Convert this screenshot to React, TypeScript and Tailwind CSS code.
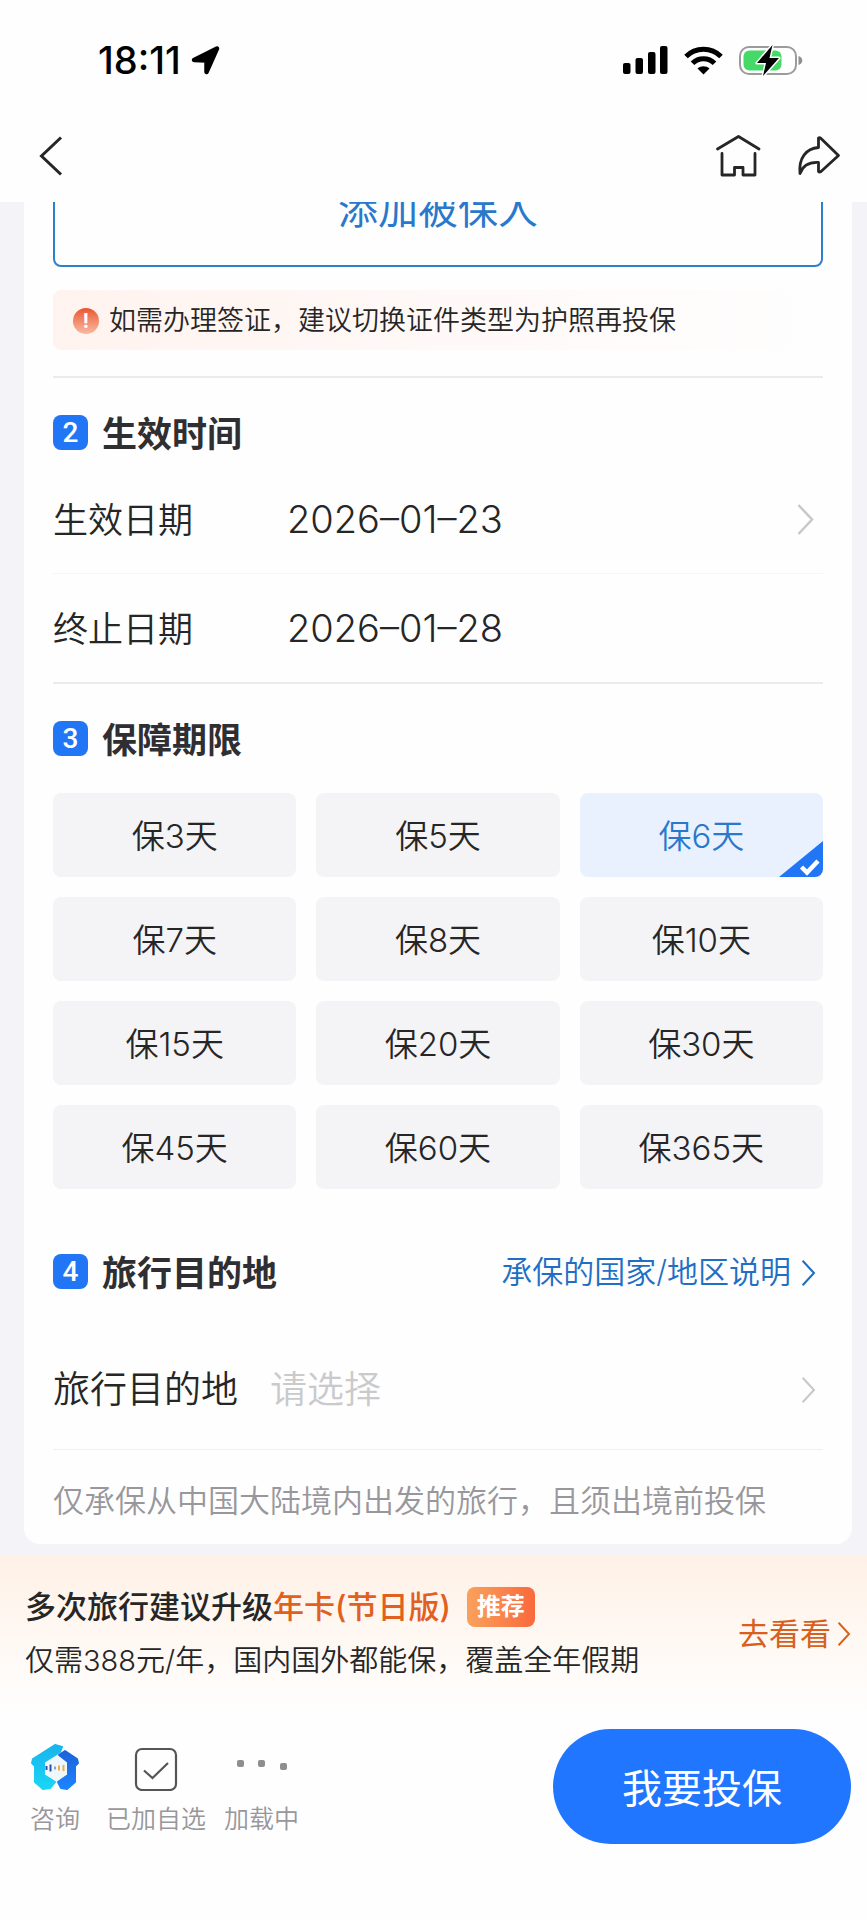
import React, { useState } from 'react';

const PERIODS = [3, 5, 6, 7, 8, 10, 15, 20, 30, 45, 60, 365];

const StatusBar = () => (
  <div className="flex h-[120px] items-center justify-between pl-[98px] pr-16 text-black">
    <div className="flex items-center gap-2.5">
      <span className="text-[38px] font-medium leading-10">18:11</span>
      <svg width="29" height="29" viewBox="0 0 29 29" aria-hidden="true">
        <path d="M26 2.500 L15.500 26 V14.500 L3 14 Z" fill="currentColor" stroke="currentColor" strokeWidth="4.500" strokeLinejoin="round" />
      </svg>
    </div>
    <div className="flex items-center gap-4">
      <svg width="45" height="28" viewBox="0 0 45 28" fill="currentColor" aria-hidden="true">
        <rect x="0" y="17" width="7.500" height="11" rx="2" />
        <rect x="12.500" y="12" width="7.500" height="16" rx="2" />
        <rect x="25" y="6" width="7.500" height="22" rx="2" />
        <rect x="37" y="0" width="7.500" height="28" rx="2" />
      </svg>
      <svg width="39" height="29" viewBox="0 0 39 29" fill="none" stroke="currentColor" strokeWidth="5" aria-hidden="true">
        <path d="M2 10.500 C11.500 0.800 27.500 0.800 37 10.500" />
        <path d="M8.500 17.300 C14.500 11.200 24.500 11.200 30.500 17.300" />
        <path d="M19.500 28.500 L13.500 22.600 C17 19.400 22 19.400 25.500 22.600 Z" fill="currentColor" stroke="none" />
      </svg>
      <svg width="64" height="31" viewBox="0 0 64 31" aria-hidden="true">
        <rect x="1" y="2" width="56" height="27" rx="9" fill="#fff" stroke="#9b9b9b" strokeWidth="2" />
        <path d="M59.500 11 C64.500 12 64.500 19 59.500 20 Z" fill="#8f8f8f" />
        <rect x="4.500" y="5.500" width="38" height="20" rx="6" fill="#45d967" />
        <path d="M33.500 0 L18 18 H27 L24 31 L40 13 H30.500 Z" fill="#000" stroke="#fff" strokeWidth="3" strokeLinejoin="round" paintOrder="stroke" />
      </svg>
    </div>
  </div>
);

const NavBar = () => (
  <nav className="flex h-[82px] items-start justify-between pl-[38px] pr-[26px] pt-[14px] text-[#262626]">
    <button aria-label="返回">
      <svg width="26" height="44" viewBox="0 0 26 44" fill="none" stroke="currentColor" strokeWidth="3" aria-hidden="true">
        <path d="M23 3.500 L3.500 22 L23 40.500" />
      </svg>
    </button>
    <div className="flex gap-9">
      <button aria-label="首页">
        <svg width="46" height="44" viewBox="0 0 46 44" fill="none" stroke="currentColor" strokeWidth="2.800" strokeLinejoin="round" strokeLinecap="round" aria-hidden="true">
          <path d="M2.500 15 L23.500 2.500 L44 15" />
          <path d="M7 19.500 V41 H19.500 V33.500 H28 V41 H40 V19.500" />
        </svg>
      </button>
      <button aria-label="分享">
        <svg width="44" height="44" viewBox="0 0 44 44" fill="none" stroke="currentColor" strokeWidth="2.800" strokeLinejoin="round" aria-hidden="true">
          <path d="M21.500 13.500 V4 Q22.500 3 24 4.500 L41.500 21.500 L24 37.500 Q22.500 38.500 21.500 37.500 V28.500 C12 28 6 31 3 39.500 C1.500 24 9 14.500 21.500 13.500 Z" />
        </svg>
      </button>
    </div>
  </nav>
);

const Chevron = ({ className }: { className: string }) => (
  <svg className={className} viewBox="0 0 17 31" fill="none" stroke="currentColor" strokeWidth="2.500" aria-hidden="true">
    <path d="M1.500 1 L15 15.500 L1.500 30" />
  </svg>
);

const SectionTitle = ({ index, title }: { index: number; title: string }) => (
  <h2 className="flex h-[37px] items-center gap-[14px] text-[35px] font-bold text-[#2f2f33]">
    <span className="flex size-[35px] items-center justify-center rounded-lg bg-[#2176f5] font-[Roboto] text-[28px] font-medium text-white">
      {index}
    </span>
    <span className="pt-1">{title}</span>
  </h2>
);

const ConsultLogo = () => (
  <svg width="50" height="48" viewBox="0 0 50 48" aria-hidden="true">
    <defs>
      <linearGradient id="cyan" x1="0" y1="0" x2="0" y2="1">
        <stop offset="0" stopColor="#19b4ee" />
        <stop offset="1" stopColor="#19d6f5" />
      </linearGradient>
      <linearGradient id="blue" x1="0" y1="0" x2="0" y2="1">
        <stop offset="0" stopColor="#1b62d8" />
        <stop offset="1" stopColor="#1c84ff" />
      </linearGradient>
    </defs>
    <path d="M25 12 L37 19 V33 L25 40 L13 33 V19 Z" fill="#eef8fc" />
    <path d="M25 2 L3 16 L2 20 L5 23 L5 39 L13 46 L20 45 L25 39 L14 32 V19 L30 9 L32 4 Z" fill="url(#cyan)" stroke="url(#cyan)" strokeWidth="2" strokeLinejoin="round" />
    <path d="M35 8 L29 12 L38 19 V32 L28 39 L31 45 L37 46 L45 39 V23 L48 20 L47 16 Z" fill="url(#blue)" stroke="url(#blue)" strokeWidth="2" strokeLinejoin="round" />
    <path d="M16.500 23 V27 M20.500 21.500 V28.500" stroke="#344f9b" strokeWidth="2" />
    <path d="M25 23.500 V26.500" stroke="#5d8fb0" strokeWidth="1.500" />
    <path d="M29 22.500 V27.500 M33.500 22 V28" stroke="#e8b13c" strokeWidth="2" />
  </svg>
);

export default function App() {
  const [period, setPeriod] = useState(6);

  return (
    <div className="min-h-screen bg-[#f4f3f7] font-['Inter','Noto_Sans_CJK_SC',sans-serif] font-[350] text-[#262626]">
      <header className="bg-[#fefefe]">
        <StatusBar />
        <NavBar />
      </header>

      <main className="overflow-hidden pb-3 pl-6 pr-[15px]">
        <div className="rounded-b-2xl bg-[#fefefe] px-[29px]">
          {/* scrolled partly under the nav bar */}
          <button className="-mt-[53px] h-[118px] w-full rounded-lg border-2 border-[#2f7fc9] pt-1 text-[40px] font-normal text-[#2a78cc]">
            添加被保人
          </button>

          <p className="mt-[23px] flex h-[60px] items-center gap-2.5 rounded-lg bg-linear-to-r from-[#fff3ef] to-[#fefefe] pl-5 pt-0.5 text-[27px]">
            <span className="flex size-[26px] items-center justify-center rounded-full bg-linear-to-b from-[#e8552a] to-[#f8b9a2] text-[20px] font-bold leading-none text-white">!</span>
            如需办理签证，建议切换证件类型为护照再投保
          </p>

          <section className="mt-[26px] border-y-2 border-[#ebebed] pt-9">
            <SectionTitle index={2} title="生效时间" />
            <button className="mt-[15px] flex h-[108px] w-full items-center border-b border-[#f6f5f7] pr-[9px] text-left">
              <span className="w-[234px] pt-0.5 text-[35px]">生效日期</span>
              <span className="flex-1 text-[38px]">2026–01–23</span>
              <Chevron className="h-[31px] w-[17px] text-[#c8c8ca]" />
            </button>
            <div className="flex h-[108px] items-center">
              <span className="w-[234px] pt-0.5 text-[35px]">终止日期</span>
              <span className="text-[38px]">2026–01–28</span>
            </div>
          </section>

          <section className="pt-9">
            <SectionTitle index={3} title="保障期限" />
            <div className="mt-9 grid grid-cols-3 gap-5">
              {PERIODS.map((days) => (
                <button
                  key={days}
                  aria-pressed={days === period}
                  onClick={() => setPeriod(days)}
                  className={`relative h-[84px] overflow-hidden rounded-lg pt-1 text-[33px] ${
                    days === period ? 'bg-[#e9f1ff] text-[#2a78cc]' : 'bg-[#f4f3f6]'
                  }`}
                >
                  保{days}天
                  {days === period && (
                    <svg className="absolute bottom-0 right-0" width="44" height="36" viewBox="0 0 44 36" aria-hidden="true">
                      <path d="M0 36 L44 0 V36 Z" fill="#2176f5" />
                      <path d="M22.500 26 L28 31.500 L39 20" fill="none" stroke="#fff" strokeWidth="4.500" />
                    </svg>
                  )}
                </button>
              ))}
            </div>
          </section>

          <section className="pt-16">
            <div className="flex items-center justify-between pr-[7px]">
              <SectionTitle index={4} title="旅行目的地" />
              <a href="#regions" className="flex h-[37px] items-center gap-2.5 pt-0.5 text-[31px] text-[#1f6fc4]">
                承保的国家/地区说明
                <Chevron className="h-[26px] w-[15px]" />
              </a>
            </div>
            <div className="mt-10 flex h-[120px] items-center border-b border-[#f0f0f2] pr-[7px] text-[37px]">
              <label htmlFor="destination" className="w-[217px]">旅行目的地</label>
              <select id="destination" className="flex-1 appearance-none bg-transparent text-[#cacacc]">
                <option>请选择</option>
              </select>
              <Chevron className="h-[26px] w-[15px] text-[#c8c8ca]" />
            </div>
            <p className="flex h-[94px] items-center whitespace-nowrap pt-2 text-[31px] text-[#98979b]">
              仅承保从中国大陆境内出发的旅行，且须出境前投保
            </p>
          </section>
        </div>
      </main>

      <aside className="flex h-[156px] items-center justify-between bg-linear-to-b from-[#fff1e6] to-[#fefefe] pl-[25px] pr-4">
        <div>
          <div className="flex items-center gap-4 text-[31px] font-medium leading-[54px]">
            <span>
              多次旅行建议升级<span className="text-[#e0601f]">年卡(节日版)</span>
            </span>
            <span className="rounded-lg bg-linear-to-r from-[#f9a15c] to-[#f9683c] px-2.5 text-[24px] font-bold leading-10 text-white">推荐</span>
          </div>
          <p className="text-[29px] leading-[54px]">仅需388元/年，国内国外都能保，覆盖全年假期</p>
        </div>
        <a href="#annual" className="flex items-center gap-1.5 text-[31px] font-normal text-[#d9601c]">
          去看看
          <Chevron className="h-6 w-[14px]" />
        </a>
      </aside>

      <footer className="flex h-[208px] items-start justify-between bg-[#fefefe] pl-[30px] pr-4 pt-[17px] text-[25px] leading-9 text-[#98979b]">
        <div className="flex gap-[18px] pt-[14px]">
          <button className="mr-2 flex flex-col items-center gap-2.5">
            <ConsultLogo />
            咨询
          </button>
          <button className="flex flex-col items-center gap-2.5">
            <svg width="48" height="48" viewBox="0 0 48 48" fill="none" stroke="#555" strokeWidth="2.200" aria-hidden="true">
              <rect x="4" y="6" width="40" height="41" rx="6" />
              <path d="M12 27.500 L20.500 35 L36 20" />
            </svg>
            已加自选
          </button>
          <button className="flex flex-col items-center gap-2.5">
            <svg width="52" height="48" viewBox="0 0 52 48" fill="#8e8e90" aria-hidden="true">
              <rect x="1" y="17" width="7" height="7" rx="2" />
              <rect x="22" y="17" width="7" height="7" rx="2" />
              <rect x="44" y="20" width="7" height="7" rx="2" />
            </svg>
            加载中
          </button>
        </div>
        <button className="h-[115px] w-[298px] rounded-full bg-[#2176ff] pt-1 text-[40px] font-normal text-white">我要投保</button>
      </footer>
    </div>
  );
}
